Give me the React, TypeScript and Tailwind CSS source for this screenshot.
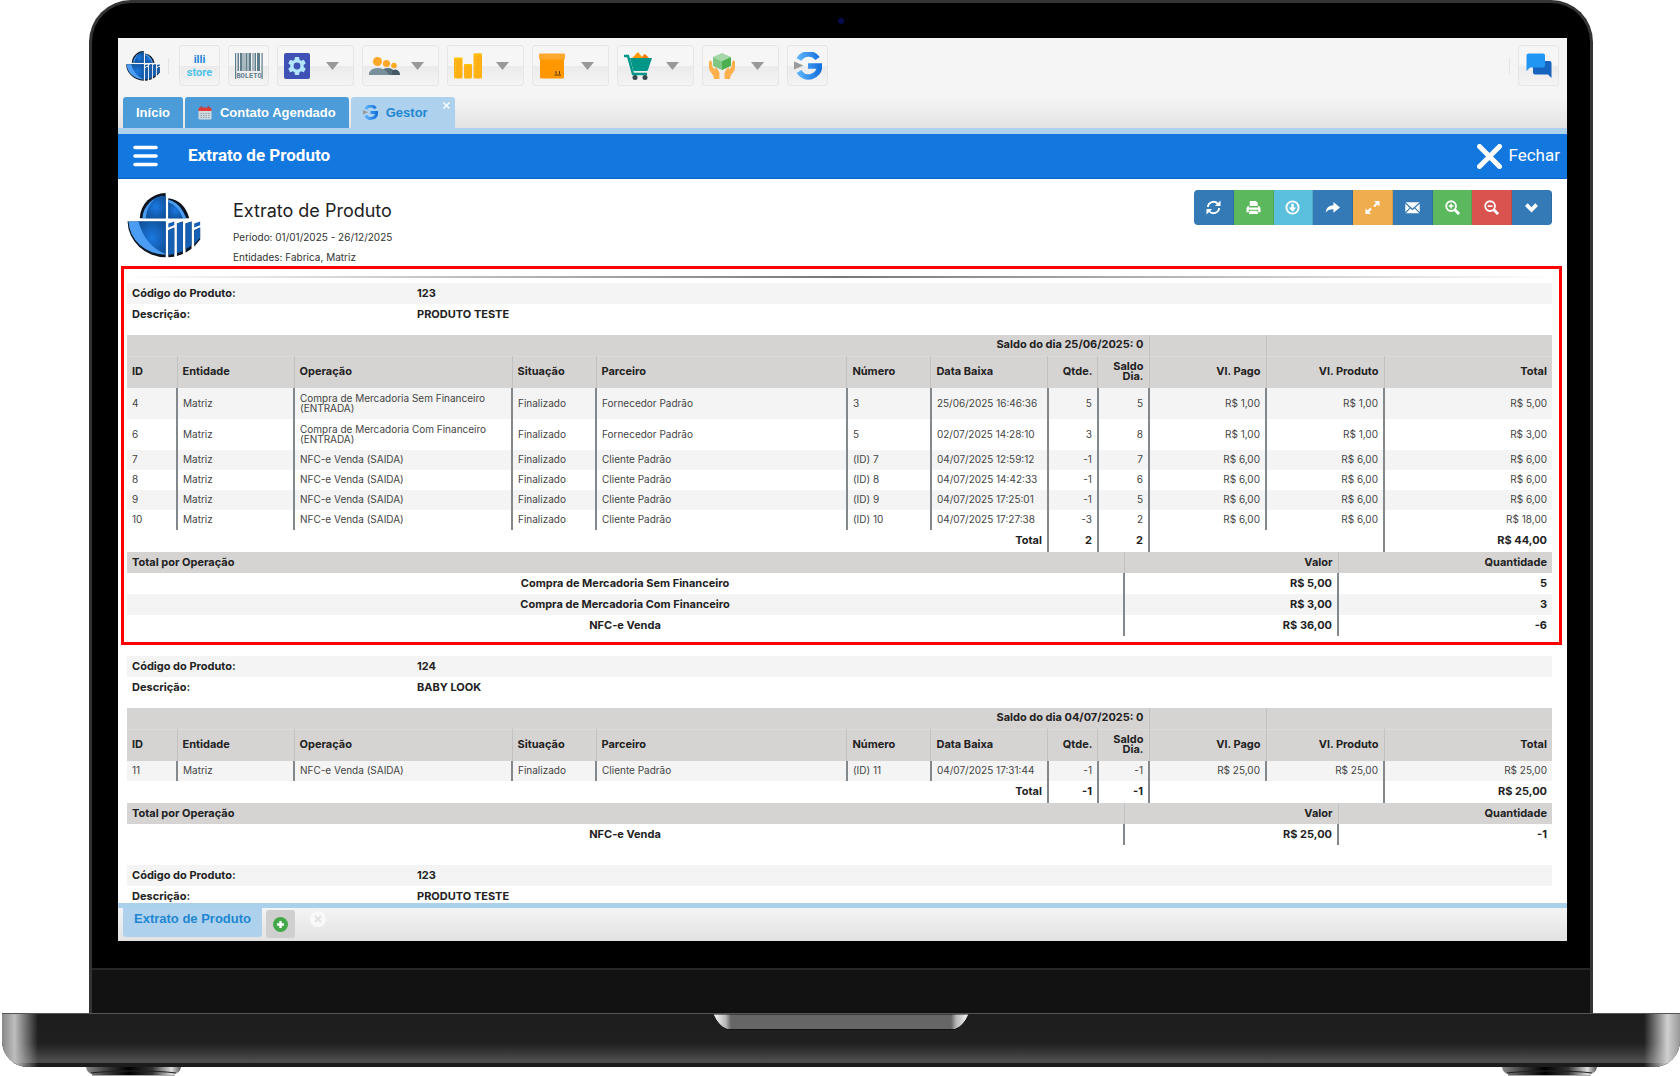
import type { ReactNode } from 'react';
import clsx from 'clsx';

interface Row {
  id: string;
  operacao: string;
  parceiro: string;
  numero: string;
  data: string;
  qtde: string;
  saldo: string;
  pago: string;
  total: string;
}

interface Product {
  codigo: string;
  descricao: string;
  saldoDia?: string;
  rows: Row[];
  total?: { qtde: string; saldo: string; valor: string };
  operacoes: { nome: string; valor: string; quantidade: string }[];
}

const products: Product[] = [
  {
    codigo: '123',
    descricao: 'PRODUTO TESTE',
    saldoDia: 'Saldo do dia 25/06/2025: 0',
    rows: [
      { id: '4', operacao: 'Compra de Mercadoria Sem Financeiro (ENTRADA)', parceiro: 'Fornecedor Padrão', numero: '3', data: '25/06/2025 16:46:36', qtde: '5', saldo: '5', pago: 'R$ 1,00', total: 'R$ 5,00' },
      { id: '6', operacao: 'Compra de Mercadoria Com Financeiro (ENTRADA)', parceiro: 'Fornecedor Padrão', numero: '5', data: '02/07/2025 14:28:10', qtde: '3', saldo: '8', pago: 'R$ 1,00', total: 'R$ 3,00' },
      { id: '7', operacao: 'NFC-e Venda (SAIDA)', parceiro: 'Cliente Padrão', numero: '(ID) 7', data: '04/07/2025 12:59:12', qtde: '-1', saldo: '7', pago: 'R$ 6,00', total: 'R$ 6,00' },
      { id: '8', operacao: 'NFC-e Venda (SAIDA)', parceiro: 'Cliente Padrão', numero: '(ID) 8', data: '04/07/2025 14:42:33', qtde: '-1', saldo: '6', pago: 'R$ 6,00', total: 'R$ 6,00' },
      { id: '9', operacao: 'NFC-e Venda (SAIDA)', parceiro: 'Cliente Padrão', numero: '(ID) 9', data: '04/07/2025 17:25:01', qtde: '-1', saldo: '5', pago: 'R$ 6,00', total: 'R$ 6,00' },
      { id: '10', operacao: 'NFC-e Venda (SAIDA)', parceiro: 'Cliente Padrão', numero: '(ID) 10', data: '04/07/2025 17:27:38', qtde: '-3', saldo: '2', pago: 'R$ 6,00', total: 'R$ 18,00' },
    ],
    total: { qtde: '2', saldo: '2', valor: 'R$ 44,00' },
    operacoes: [
      { nome: 'Compra de Mercadoria Sem Financeiro', valor: 'R$ 5,00', quantidade: '5' },
      { nome: 'Compra de Mercadoria Com Financeiro', valor: 'R$ 3,00', quantidade: '3' },
      { nome: 'NFC-e Venda', valor: 'R$ 36,00', quantidade: '-6' },
    ],
  },
  {
    codigo: '124',
    descricao: 'BABY LOOK',
    saldoDia: 'Saldo do dia 04/07/2025: 0',
    rows: [
      { id: '11', operacao: 'NFC-e Venda (SAIDA)', parceiro: 'Cliente Padrão', numero: '(ID) 11', data: '04/07/2025 17:31:44', qtde: '-1', saldo: '-1', pago: 'R$ 25,00', total: 'R$ 25,00' },
    ],
    total: { qtde: '-1', saldo: '-1', valor: 'R$ 25,00' },
    operacoes: [{ nome: 'NFC-e Venda', valor: 'R$ 25,00', quantidade: '-1' }],
  },
  { codigo: '123', descricao: 'PRODUTO TESTE', rows: [], operacoes: [] },
];

function IlliLogo({ className }: { className: string }) {
  return (
    <svg className={className} viewBox="0 0 222 196">
      <defs>
        <radialGradient id="globe" cx="0.5" cy="0.5" r="0.6">
          <stop offset="0" stopColor="#1b78e0" />
          <stop offset="1" stopColor="#10529c" />
        </radialGradient>
      </defs>
      <path d="M38 76 A78 78 0 0 1 116 0 V76Z" fill="#0b1420" />
      <path d="M46 76 A72 72 0 0 1 116 8 V76Z" fill="#4a9df2" />
      <path d="M56 76 A86 86 0 0 1 84 16 Q100 8 116 8 V76Z" fill="url(#globe)" />
      <path d="M124 16 Q172 22 187 76 H124Z" fill="#0b1420" />
      <path d="M124 20 Q160 28 178 76 H124Z" fill="#4a9df2" />
      <path d="M124 28 Q152 36 168 76 H124Z" fill="url(#globe)" />
      <path d="M1 86 H116 V194 A116 112 0 0 1 1 86Z" fill="#0b1420" />
      <path d="M4 86 H116 V186 A112 104 0 0 1 4 86Z" fill="#4a9df2" />
      <path d="M34 86 H116 V184 Q54 160 34 86Z" fill="url(#globe)" />
      <g fill="#0b1420">
        <path d="M124 112 L142 104 V192 L124 194Z" />
        <path d="M150 92 L168 86 V184 L150 190Z" />
        <path d="M176 92 L194 86 V168 L176 180Z" />
        <path d="M202 112 L220 104 V140 L202 162Z" />
      </g>
      <g fill="#1560b4">
        <path d="M124 92 L142 86 V97 L124 104Z" />
        <path d="M124 112 L142 104 V184 L124 187Z" />
        <path d="M150 92 L168 86 V176 L150 182Z" />
        <path d="M176 92 L194 86 V158 L176 170Z" />
        <path d="M202 92 L220 86 V97 L202 104Z" />
        <path d="M202 112 L220 104 V136 L202 154Z" />
      </g>
    </svg>
  );
}

function GIcon({ className }: { className: string }) {
  return (
    <svg className={className} viewBox="0 0 28 28">
      <defs>
        <linearGradient id="g-blue" x1="0" x2="1">
          <stop offset="0" stopColor="#5ab0fb" />
          <stop offset="1" stopColor="#1673dd" />
        </linearGradient>
      </defs>
      <path
        d="M23.500 6.500 A11 11 0 0 0 5 7.500 M5 19.500 A11 11 0 0 0 25.500 14 H14"
        fill="none"
        stroke="url(#g-blue)"
        strokeWidth="5.500"
      />
      <path d="M0 9.500 L9.500 13.500 L0 17.500Z" fill="#9a9a9a" />
    </svg>
  );
}

function GearIcon() {
  return (
    <svg className="size-[26px]" viewBox="0 0 26 26">
      <rect width="26" height="26" rx="2" fill="#3f51b5" />
      <g fill="#b3e5fc">
        <circle cx="13" cy="13" r="6.800" />
        <rect x="10.700" y="4" width="4.600" height="18" rx="1" />
        <rect x="10.700" y="4" width="4.600" height="18" rx="1" transform="rotate(60 13 13)" />
        <rect x="10.700" y="4" width="4.600" height="18" rx="1" transform="rotate(120 13 13)" />
      </g>
      <circle cx="13" cy="13" r="3.400" fill="#3f51b5" />
    </svg>
  );
}

function PeopleIcon() {
  return (
    <svg className="w-[31px] h-[18px]" viewBox="0 0 31 18">
      <path d="M13 18 V14 Q14 11 19 11 Q23 11 25 14 V18Z" fill="#546e7a" />
      <path d="M23 18 V14 Q24 12.500 26 12.500 Q31 13 31 18Z" fill="#455a64" />
      <path d="M0 18 V16 Q2 11 9 11 Q17 11 20 18Z" fill="#78909c" />
      <g fill="#ffa726">
        <circle cx="8.500" cy="4.500" r="4.500" />
        <circle cx="17.500" cy="6.500" r="3.600" />
        <circle cx="25" cy="8.500" r="2.800" />
      </g>
    </svg>
  );
}

function CoinsIcon() {
  return (
    <svg className="w-7 h-[26px]" viewBox="0 0 28 26">
      <g fill="#ffb012">
        <rect x="0" y="5" width="8.500" height="20.500" rx="1.500" />
        <rect x="10" y="11.500" width="8" height="14" rx="1.500" />
        <rect x="19.500" y="0.500" width="8.500" height="25" rx="1.500" />
      </g>
      <g stroke="#ffca45" strokeWidth="1" strokeDasharray="1 2">
        <path d="M1.500 6 V25 M11.500 13 V25 M21 2 V25" />
      </g>
      <g fill="#ffc107">
        <rect x="0" y="4.500" width="8.500" height="2" rx="1" />
        <rect x="10" y="11" width="8" height="2" rx="1" />
        <rect x="19.500" y="0.500" width="8.500" height="2" rx="1" />
      </g>
    </svg>
  );
}

function BoxIcon() {
  return (
    <svg className="size-[26px]" viewBox="0 0 26 26">
      <path d="M1 6 H25 V24 Q25 25.500 23.500 25.500 H2.500 Q1 25.500 1 24Z" fill="#ff9800" />
      <rect y="0.500" width="26" height="6" rx="1" fill="#ffa82e" />
      <path d="M17 18 V21 M20.500 18 V21 M15.500 22 H22" stroke="#5d3a12" strokeWidth="1" />
    </svg>
  );
}

function CartIcon() {
  return (
    <svg className="size-7" viewBox="0 0 28 28">
      <path d="M8 6 L14 0 L18 5 L20 2 L24 6Z" fill="#ff9800" />
      <path d="M18 6 L21 2 L25 6Z" fill="#f57c00" />
      <path d="M6 6 H28 L24 18 Q23.500 19 22.500 19 H9.500Z" fill="#009688" />
      <path d="M0 4 H4 L9 22 H23" fill="none" stroke="#009688" strokeWidth="2.400" />
      <circle cx="11" cy="25.500" r="2.500" fill="#37474f" />
      <circle cx="21" cy="25.500" r="2.500" fill="#37474f" />
    </svg>
  );
}

function HandsIcon() {
  return (
    <svg className="size-[26px]" viewBox="0 0 26 26">
      <path d="M13 0 L22 4 L13 8 L4 4Z" fill="#a5d6a7" />
      <path d="M4 4 L13 8 V17 L4 13Z" fill="#81c784" />
      <path d="M22 4 L13 8 V17 L22 13Z" fill="#4caf50" />
      <path d="M0 9 Q0 7.500 1.500 7.500 Q2.500 7.500 2.800 9 L3.500 14 L6 17 Q5 14 7 14.500 Q10.500 18 10.500 21 V26 H5 Q5 22.500 2 19.500 Q0 17.500 0 15Z" fill="#ffb04c" />
      <path d="M26 9 Q26 7.500 24.500 7.500 Q23.500 7.500 23.200 9 L22.500 14 L20 17 Q21 14 19 14.500 Q15.500 18 15.500 21 V26 H21 Q21 22.500 24 19.500 Q26 17.500 26 15Z" fill="#ffb04c" />
    </svg>
  );
}

function ChatIcon() {
  return (
    <svg className="size-[26px]" viewBox="0 0 26 26">
      <path d="M8 8 H23.500 Q25.500 8 25.500 10 V25 L22 21.500 H9 Q7 21.500 7 19.500 V8Z" fill="#1565c0" />
      <path d="M2.500 0.500 H17 Q19 0.500 19 2.500 V12.500 Q19 14.500 17 14.500 H4 L0.500 18 V2.500 Q0.500 0.500 2.500 0.500Z" fill="#2196f3" />
    </svg>
  );
}

function CalendarIcon() {
  return (
    <svg className="size-[14px]" viewBox="0 0 14 14">
      <rect x="0.500" y="4" width="13" height="9.500" rx="1" fill="#cfd8dc" />
      <path d="M0.500 5 V3 Q0.500 1.500 2 1.500 H12 Q13.500 1.500 13.500 3 V5Z" fill="#e53935" />
      <path d="M3.500 0 V3 M10.500 0 V3" stroke="#b0464a" strokeWidth="1.500" />
      <path d="M2.500 7.500 H11.500 M2.500 9.500 H11.500 M2.500 11.500 H11.500" stroke="#90a4ae" strokeDasharray="1.500 1" />
    </svg>
  );
}

function ToolButton({ label, children, menu }: { label: string; children: ReactNode; menu?: boolean }) {
  return (
    <button
      aria-label={label}
      className={clsx(
        'h-[41px] shrink-0 flex items-center rounded-[3px] border border-[#e6e6e6] bg-linear-to-b from-[#f6f6f6] from-50% via-[#ebebeb] via-52% to-[#f4f4f4]',
        menu ? 'w-[77px] justify-between pl-[6px] pr-[14px]' : 'w-[41px] justify-center',
      )}
    >
      {children}
      {menu && (
        <svg className="w-[13px] h-2" viewBox="0 0 13 8">
          <path d="M0 0 H13 L6.500 8Z" fill="#999" />
        </svg>
      )}
    </button>
  );
}

function Toolbar() {
  return (
    <div className="flex items-center gap-2 pt-[7px] px-2 pb-[11px]">
      <IlliLogo className="w-[34px] h-[30px]" />
      <span className="w-px h-4 mr-[2px] bg-[#e4e4e4]" />
      <ToolButton label="illi store">
        <span className="flex flex-col items-center font-['Roboto',sans-serif] text-[11px] font-bold leading-[13px]">
          <span className="text-[#1b86d8]">illi</span>
          <span className="text-[#4fc3e8]">store</span>
        </span>
      </ToolButton>
      <ToolButton label="Boleto">
        <svg className="w-7 h-[26px]" viewBox="0 0 28 26">
          <g fill="#607d8b">
            <rect x="0" width="1.200" height="26" />
            <rect x="2.500" width="1.500" height="18" />
            <rect x="5" width="2.500" height="18" />
            <rect x="8.500" width="1" height="18" />
            <rect x="10.500" width="2" height="18" />
            <rect x="13.500" width="2.500" height="18" />
            <rect x="17.500" width="1" height="18" />
            <rect x="19.500" width="1.500" height="18" />
            <rect x="22" width="3" height="18" />
            <rect x="26.500" width="1.200" height="26" />
          </g>
          <text x="14" y="25" textAnchor="middle" fontSize="7" fontWeight="700" fontFamily="Liberation Mono, monospace" fill="#607d8b">
            BOLETO
          </text>
        </svg>
      </ToolButton>
      <ToolButton label="Configurações" menu><GearIcon /></ToolButton>
      <ToolButton label="Pessoas" menu><PeopleIcon /></ToolButton>
      <ToolButton label="Financeiro" menu><CoinsIcon /></ToolButton>
      <ToolButton label="Estoque" menu><BoxIcon /></ToolButton>
      <ToolButton label="Vendas" menu><CartIcon /></ToolButton>
      <ToolButton label="Produtos" menu><HandsIcon /></ToolButton>
      <ToolButton label="Gestor"><GIcon className="size-7" /></ToolButton>
      <span className="w-px h-4 ml-auto bg-[#e4e4e4]" />
      <ToolButton label="Chat"><ChatIcon /></ToolButton>
    </div>
  );
}

function Tabs() {
  const tab = "relative h-[31px] flex items-center rounded-t-[3px] font-['Liberation_Sans',Arial,sans-serif] text-[13px] font-bold";
  return (
    <div className="flex gap-[2px] pl-[5px] bg-linear-to-b from-[#f5f5f5] to-[#e3e3e3] border-b-6 border-[#aed2ee]">
      <button className={clsx(tab, 'px-[13px] bg-[#4b9cd8] text-white')}>Início</button>
      <button className={clsx(tab, 'gap-2 px-[13px] bg-[#4b9cd8] text-white')}>
        <CalendarIcon />
        Contato Agendado
      </button>
      <button className={clsx(tab, 'gap-2 pl-3 pr-[27px] bg-[#aed2ee] text-[#1f86d1]')}>
        <GIcon className="size-[15px]" />
        Gestor
        <svg className="absolute right-[5px] top-[5px] size-[7px]" viewBox="0 0 7 7">
          <path d="M0.500 0.500 L6.500 6.500 M6.500 0.500 L0.500 6.500" stroke="#fff" strokeWidth="1.400" />
        </svg>
      </button>
    </div>
  );
}

const stroke = { fill: 'none', stroke: '#fff', strokeWidth: 2 };

const actions = [
  {
    label: 'Atualizar',
    bg: 'bg-[#337ab7]',
    icon: (
      <g>
        <path d="M2 7.500 A6 6 0 0 1 12.500 4 M14 8.500 A6 6 0 0 1 3.500 12" {...stroke} />
        <path d="M15.500 0.500 V6.500 H9.500Z M0.500 15.500 V9.500 H6.500Z" fill="#fff" />
      </g>
    ),
  },
  {
    label: 'Imprimir',
    bg: 'bg-[#5cb85c]',
    icon: (
      <g fill="#fff">
        <path d="M4 6.500 V1 H10.500 L12.500 3 V6.500Z" />
        <path d="M0.500 9 Q0.500 6.500 3 6 V8 H13 V6 Q15.500 6.500 15.500 9 V13 H13 V10.500 H3 V13 H0.500Z" />
        <path d="M4 11.500 H12 L13 15 H3Z" />
      </g>
    ),
  },
  {
    label: 'Baixar',
    bg: 'bg-[#5bc0de]',
    icon: (
      <g>
        <circle cx="8" cy="8" r="6.500" {...stroke} />
        <path d="M6.700 4 H9.300 V8 H12 L8 12.500 L4 8 H6.700Z" fill="#fff" />
      </g>
    ),
  },
  {
    label: 'Compartilhar',
    bg: 'bg-[#337ab7]',
    icon: <path d="M0.500 13.500 Q1.500 5.500 9 5.500 V2 L16 8 L9 13.500 V10 Q4 9.500 0.500 13.500Z" fill="#fff" />,
  },
  {
    label: 'Tela cheia',
    bg: 'bg-[#f0ad4e]',
    icon: (
      <g fill="#fff">
        <path d="M9.500 1 H15.500 V7 L13.300 4.800 L10.500 7.700 L8.800 6 L11.700 3.200Z" />
        <path d="M6.500 15 H0.500 V9 L2.700 11.200 L5.500 8.300 L7.200 10 L4.300 12.800Z" />
      </g>
    ),
  },
  {
    label: 'E-mail',
    bg: 'bg-[#337ab7]',
    icon: (
      <g fill="#fff">
        <path d="M0.500 2.500 H15.500 L8 9Z" />
        <path d="M0.300 4 L5 8.200 L0.300 12.800Z M15.700 4 L11 8.200 L15.700 12.800Z" />
        <path d="M5.800 9 L8 10.800 L10.200 9 L15.200 14 H0.800Z" />
      </g>
    ),
  },
  {
    label: 'Aumentar zoom',
    bg: 'bg-[#5cb85c]',
    icon: (
      <g>
        <circle cx="6.500" cy="6.500" r="5.200" {...stroke} />
        <path d="M10.500 10.500 L15 15" {...stroke} strokeWidth="3" />
        <path d="M6.500 4 V9 M4 6.500 H9" {...stroke} strokeWidth="1.600" />
      </g>
    ),
  },
  {
    label: 'Diminuir zoom',
    bg: 'bg-[#d9534f]',
    icon: (
      <g>
        <circle cx="6.500" cy="6.500" r="5.200" {...stroke} />
        <path d="M10.500 10.500 L15 15" {...stroke} strokeWidth="3" />
        <path d="M4 6.500 H9" {...stroke} />
      </g>
    ),
  },
  {
    label: 'Mais opções',
    bg: 'bg-[#337ab7]',
    icon: <path d="M2.500 5 L8 10.500 L13.500 5" {...stroke} strokeWidth="4" />,
  },
];

function ReportHeader() {
  return (
    <div className="h-[87px] flex items-start">
      <IlliLogo className="w-[74px] h-[65px] mt-[14px]" />
      <div className="ml-8 mt-5 text-[10px] text-[#333]">
        <h1 className="text-[18px] leading-6 text-[#222]">Extrato de Produto</h1>
        <p className="mt-1 leading-5">Período: 01/01/2025 - 26/12/2025</p>
        <p className="leading-5">Entidades: Fabrica, Matriz</p>
      </div>
      <div className="ml-auto mt-[11px] grid grid-cols-9 w-[358px] h-[35px] rounded overflow-hidden">
        {actions.map(({ label, bg, icon }) => (
          <button key={label} aria-label={label} className={clsx('flex items-center justify-center border-r border-black/10', bg)}>
            <svg className="size-[15px]" viewBox="0 0 16 16">{icon}</svg>
          </button>
        ))}
      </div>
    </div>
  );
}

const th = 'border-r border-[#c2c2c2] px-[5px] pb-[2px] leading-[10px] font-bold last:border-r-0';
const td = 'border-r-2 border-[#83888c] px-[5px] pb-[2px] leading-[10px] last:border-r-0';

function ProductInfo({ codigo, descricao }: { codigo: string; descricao: string }) {
  return (
    <table className="w-full table-fixed text-left text-[11px]">
      <tbody>
        <tr className="h-[21px] bg-[#f4f4f4]">
          <th className="w-[285px] px-[5px] pb-[2px] leading-4">Código do Produto:</th>
          <td className="px-[5px] pb-[2px] leading-4 font-bold">{codigo}</td>
        </tr>
        <tr className="h-[21px]">
          <th className="px-[5px] pb-[2px] leading-4">Descrição:</th>
          <td className="px-[5px] pb-[2px] leading-4 font-bold">{descricao}</td>
        </tr>
      </tbody>
    </table>
  );
}

function MovementTable({ product }: { product: Product }) {
  return (
    <table className="mt-[10px] w-full table-fixed text-left text-[10px] text-[#444]">
      <colgroup>
        <col className="w-[50px]" />
        <col className="w-[117px]" />
        <col className="w-[218px]" />
        <col className="w-[84px]" />
        <col />
        <col className="w-[84px]" />
        <col className="w-[117px]" />
        <col className="w-[50px]" />
        <col className="w-[51px]" />
        <col className="w-[117px]" />
        <col className="w-[118px]" />
        <col className="w-[168px]" />
      </colgroup>
      <thead className="bg-[#d6d4d3] text-[11px] text-[#222]">
        <tr className="h-[21px] border-b border-[#dcdbda]">
          <th colSpan={9} className={clsx(th, 'text-right')}>{product.saldoDia}</th>
          <th className={th} />
          <th colSpan={2} className={th} />
        </tr>
        <tr className="h-8">
          <th className={th}>ID</th>
          <th className={th}>Entidade</th>
          <th className={th}>Operação</th>
          <th className={th}>Situação</th>
          <th className={th}>Parceiro</th>
          <th className={th}>Número</th>
          <th className={th}>Data Baixa</th>
          <th className={clsx(th, 'text-right')}>Qtde.</th>
          <th className={clsx(th, 'text-right')}>Saldo Dia.</th>
          <th className={clsx(th, 'text-right')}>Vl. Pago</th>
          <th className={clsx(th, 'text-right')}>Vl. Produto</th>
          <th className={clsx(th, 'text-right')}>Total</th>
        </tr>
      </thead>
      <tbody>
        {product.rows.map((row) => (
          <tr key={row.id} className={clsx('odd:bg-[#f4f4f4]', row.operacao.startsWith('Compra') ? 'h-[31px]' : 'h-5')}>
            <td className={td}>{row.id}</td>
            <td className={td}>Matriz</td>
            <td className={td}>{row.operacao}</td>
            <td className={td}>Finalizado</td>
            <td className={td}>{row.parceiro}</td>
            <td className={td}>{row.numero}</td>
            <td className={clsx(td, 'whitespace-nowrap')}>{row.data}</td>
            <td className={clsx(td, 'text-right')}>{row.qtde}</td>
            <td className={clsx(td, 'text-right')}>{row.saldo}</td>
            <td className={clsx(td, 'text-right')}>{row.pago}</td>
            <td className={clsx(td, 'text-right')}>{row.pago}</td>
            <td className={clsx(td, 'text-right')}>{row.total}</td>
          </tr>
        ))}
      </tbody>
      <tfoot className="text-right text-[11px] font-bold text-[#222]">
        <tr className="h-[22px]">
          <td colSpan={7} className={td}>Total</td>
          <td className={td}>{product.total?.qtde}</td>
          <td className={td}>{product.total?.saldo}</td>
          <td colSpan={2} className={td} />
          <td className={td}>{product.total?.valor}</td>
        </tr>
      </tfoot>
    </table>
  );
}

function OperationTable({ product }: { product: Product }) {
  return (
    <table className="w-full table-fixed text-right text-[11px] font-bold">
      <thead className="bg-[#d6d4d3]">
        <tr className="h-[21px]">
          <th className={clsx(th, 'text-left')}>Total por Operação</th>
          <th className={clsx(th, 'w-[214px]')}>Valor</th>
          <th className={clsx(th, 'w-[214px]')}>Quantidade</th>
        </tr>
      </thead>
      <tbody>
        {product.operacoes.map((op) => (
          <tr key={op.nome} className="h-[21px] even:bg-[#f4f4f4]">
            <td className={clsx(td, 'text-center')}>{op.nome}</td>
            <td className={td}>{op.valor}</td>
            <td className={td}>{op.quantidade}</td>
          </tr>
        ))}
      </tbody>
    </table>
  );
}

function ProductSection({ product }: { product: Product }) {
  return (
    <>
      <ProductInfo codigo={product.codigo} descricao={product.descricao} />
      {product.rows.length > 0 && (
        <>
          <MovementTable product={product} />
          <OperationTable product={product} />
        </>
      )}
    </>
  );
}

function Screen() {
  const [first, ...others] = products;
  return (
    <div className="flex-1 min-h-0 flex flex-col overflow-hidden bg-[#f5f5f5]">
      <Toolbar />
      <Tabs />
      <header className="h-[45px] shrink-0 flex items-center pl-[15px] pr-[7px] bg-[#1377e0] border-b border-[#0c62c4] font-['Roboto',sans-serif] text-[17px] text-white">
        <button aria-label="Menu">
          <svg className="w-[25px] h-[22px]" viewBox="0 0 25 22">
            <path d="M2 2.500 H23 M2 11 H23 M2 19.500 H23" stroke="#fff" strokeWidth="3.600" strokeLinecap="round" />
          </svg>
        </button>
        <h2 className="ml-[30px] font-bold">Extrato de Produto</h2>
        <button className="ml-auto flex items-center gap-[6px]">
          <svg className="size-[25px]" viewBox="0 0 25 25">
            <path d="M2.500 2.500 L22.500 22.500 M22.500 2.500 L2.500 22.500" stroke="#fff" strokeWidth="5" strokeLinecap="round" />
          </svg>
          Fechar
        </button>
      </header>
      <main className="flex-1 min-h-0 overflow-hidden pl-[9px] pr-[15px] bg-white text-[#222] font-['Inter',sans-serif]">
        <ReportHeader />
        <section className="-ml-[6px] -mr-[10px] pl-[3px] pr-[7px] pt-[7px] pb-[6px] border-3 border-[#ff0000]">
          <div className="h-[2px] mb-[5px] bg-linear-to-r from-transparent via-[#777] to-transparent" />
          <ProductSection product={first} />
        </section>
        <div className="mt-[11px] flex flex-col gap-5">
          {others.map((product) => (
            <section key={product.codigo}>
              <ProductSection product={product} />
            </section>
          ))}
        </div>
      </main>
      <footer className="h-[38px] shrink-0 flex items-start pl-[5px] border-t-5 border-[#a9d1ee] bg-linear-to-b from-[#f4f4f4] to-[#e2e2e2]">
        <button className="h-[29px] px-[11px] pb-2 rounded-b-[3px] bg-[#aed2ee] text-[#1f86d1] font-['Liberation_Sans',Arial,sans-serif] text-[13px] font-bold">
          Extrato de Produto
        </button>
        <button aria-label="Adicionar" className="w-[29px] h-7 ml-1 mt-[2px] flex items-center justify-center rounded-[3px] bg-[#cfcfcf]">
          <svg className="size-[15px]" viewBox="0 0 15 15">
            <circle cx="7.500" cy="7.500" r="7.500" fill="#43a847" />
            <path d="M7.500 4 V11 M4 7.500 H11" stroke="#fff" strokeWidth="2.400" />
          </svg>
        </button>
        <button aria-label="Remover" className="ml-[15px] mt-[3px]">
          <svg className="size-4" viewBox="0 0 16 16">
            <circle cx="8" cy="8" r="8" fill="#f9f9f9" />
            <path d="M5 5 L11 11 M11 5 L5 11" stroke="#e2e2e2" strokeWidth="2" />
          </svg>
        </button>
      </footer>
    </div>
  );
}

function Foot() {
  return (
    <svg className="w-[95px] h-[10px]" viewBox="0 0 95 10">
      <defs>
        <linearGradient id="foot" x1="0" x2="1">
          <stop offset="0" stopColor="#888" />
          <stop offset="0.250" stopColor="#333" />
          <stop offset="0.450" stopColor="#000" />
          <stop offset="0.700" stopColor="#333" />
          <stop offset="0.900" stopColor="#ddd" />
          <stop offset="1" stopColor="#555" />
        </linearGradient>
      </defs>
      <path d="M0 0 H95 Q94 6 88 7 V10 H6 V7 Q1 6 0 0Z" fill="url(#foot)" />
      <path d="M5 6 Q20 4 47 4 Q75 4 90 6" fill="none" stroke="#222" />
      <path d="M6 8.500 H89" stroke="#aaa" />
    </svg>
  );
}

export default function App() {
  return (
    <div className="h-screen flex flex-col overflow-hidden bg-white">
      <div className="flex-1 min-h-0 flex flex-col ml-[89px] mr-[87px] rounded-t-[42px] border-x-3 border-t-3 border-[#343434] bg-black">
        <div className="h-[35px] shrink-0 flex items-center justify-center">
          <span className="size-[6px] rounded-full bg-[#0a0a50]" />
        </div>
        <div className="flex-1 min-h-0 flex flex-col pl-[26px] pr-[23px] pb-[27px]">
          <Screen />
        </div>
        <div className="h-[45px] shrink-0 bg-[#121212] border-t-2 border-[#262626]" />
      </div>
      <div className="relative h-[54px] shrink-0 ml-[2px] rounded-b-[26px] overflow-hidden border-t border-[#555] bg-linear-to-b from-[#1d1d1d] from-0% via-[#202020] via-55% to-[#4c4c4c] to-88%">
        <div className="absolute inset-x-0 bottom-0 h-1 bg-[#1c1c1c]" />
        <div className="absolute inset-y-0 left-0 w-9 bg-linear-to-r from-[#888] via-[#bdbdbd] via-35% to-transparent" />
        <div className="absolute inset-y-0 right-0 w-9 bg-linear-to-l from-[#999] via-[#d0d0d0] via-35% to-transparent" />
        <svg className="absolute left-1/2 top-0 -ml-[128px] w-64 h-4" viewBox="0 0 256 16">
          <defs>
            <linearGradient id="notch" x1="0" x2="1">
              <stop offset="0" stopColor="#fff" />
              <stop offset="0.050" stopColor="#b5b5b5" />
              <stop offset="0.070" stopColor="#666" />
              <stop offset="0.930" stopColor="#666" />
              <stop offset="0.950" stopColor="#b5b5b5" />
              <stop offset="1" stopColor="#fff" />
            </linearGradient>
          </defs>
          <path d="M0 0 H256 Q251 12 242 15.500 H14 Q5 12 0 0Z" fill="url(#notch)" stroke="#111" />
        </svg>
      </div>
      <div className="h-[9px] shrink-0 flex justify-between pl-[86px] pr-[83px]">
        <Foot />
        <Foot />
      </div>
    </div>
  );
}
